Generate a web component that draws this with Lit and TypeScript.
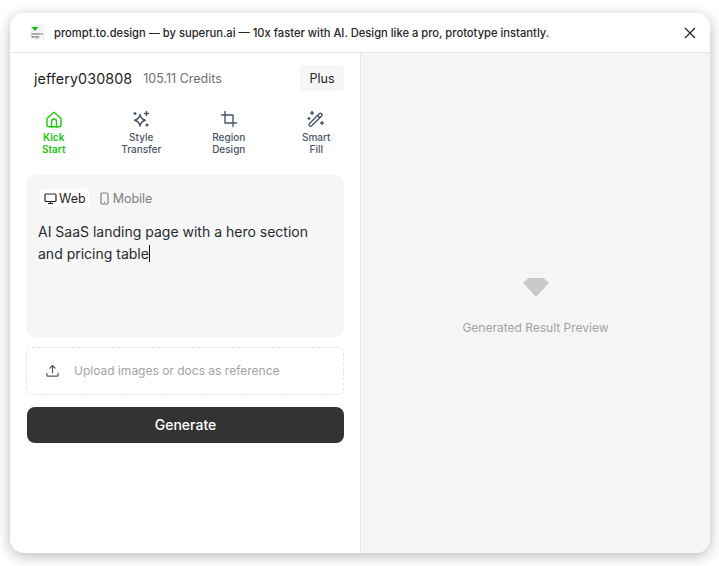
import {css, html, LitElement, svg} from 'lit';
import {customElement} from 'lit/decorators.js';

const house = svg`<path d="M3 9.500 10 3.200l7 6.300v6.300a2 2 0 0 1-2 2H5a2 2 0 0 1-2-2z"/><path d="M7.500 18v-5.500a2.500 2.500 0 0 1 5 0V18"/>`;
const sparkle = svg`<path d="M9 5.500c.7 3.600 2 5 5.500 5.700-3.500.7-4.800 2.100-5.500 5.800-.7-3.700-2-5.100-5.500-5.800C7 10.500 8.300 9.100 9 5.500z"/><path d="M15.500 2.500v4M13.500 4.500h4M4 3.500v2M3 4.500h2M16 15v2M15 16h2"/>`;
const crop = svg`<path d="M6 2.500V14h11.500"/><path d="M2.500 6H14v11.500"/>`;
const wand = svg`<path d="m3.500 14.500 9.800-9.800a1.600 1.600 0 0 1 2.300 2.300l-9.800 9.800a1.600 1.600 0 0 1-2.300-2.300z"/><path d="m11.500 6.500 2.300 2.300"/><path d="M6 2.500v3M4.500 4h3M3 8.500v2M2 9.500h2M16 12.500v3M14.500 14h3"/>`;

const tools = [
  {icon: house, lines: ['Kick', 'Start'], active: true},
  {icon: sparkle, lines: ['Style', 'Transfer'], active: false},
  {icon: crop, lines: ['Region', 'Design'], active: false},
  {icon: wand, lines: ['Smart', 'Fill'], active: false},
];

@customElement('app-root')
export class AppRoot extends LitElement {
  static override styles = css`
    :host {
      display: block;
      height: 566px;
      box-sizing: border-box;
      padding: 13px 9px 13px 10px;
      font-family: Inter, 'Liberation Sans', sans-serif;
      background: #fff;
      color: #1f2328;
    }
    .window {
      height: 540px;
      display: flex;
      flex-direction: column;
      border-radius: 14px;
      background: #fff;
      overflow: hidden;
      box-shadow: 0 3px 14px rgba(0, 0, 0, 0.28);
    }
    .titlebar {
      height: 39px;
      flex: none;
      display: flex;
      align-items: center;
      padding: 0 13px 0 20px;
      border-bottom: 1px solid #e6e6e6;
      font-size: 11.2px;
      font-weight: 500;
      color: #262626;
    }
    .logo {
      width: 15px;
      height: 15px;
      margin-right: 9px;
      flex: none;
      display: block;
    }
    .logo text {
      font-size: 2.4px;
      font-weight: 600;
      fill: #555;
    }
    .title {
      flex: 1;
      white-space: nowrap;
    }
    .close {
      width: 14px;
      height: 14px;
      display: block;
    }
    .body {
      flex: 1;
      display: flex;
      min-height: 0;
    }
    .left {
      width: 350px;
      flex: none;
      border-right: 1px solid #e6e6e6;
    }
    .account {
      display: flex;
      align-items: center;
      height: 26px;
      margin-top: 12px;
      padding: 0 16px 0 24px;
    }
    .name {
      font-size: 14.3px;
      letter-spacing: 0.1px;
      margin-right: 11px;
    }
    .credits {
      flex: 1;
      font-size: 12.5px;
      color: #6f6f6f;
    }
    .plan {
      width: 44px;
      height: 26px;
      display: flex;
      align-items: center;
      justify-content: center;
      background: #f6f6f6;
      border-radius: 4px;
      font-size: 12.5px;
    }
    .tools {
      display: grid;
      grid-template-columns: repeat(4, 1fr);
      margin-top: 18px;
    }
    .tool {
      display: flex;
      flex-direction: column;
      align-items: center;
      color: #4a5568;
      font-size: 10px;
      line-height: 12px;
      font-weight: 500;
      text-align: center;
    }
    .tool.active {
      color: #22c511;
      font-weight: 600;
    }
    .tool svg {
      width: 20px;
      height: 20px;
      margin-bottom: 2px;
      fill: none;
      stroke: currentColor;
      stroke-width: 1.4;
      stroke-linecap: round;
      stroke-linejoin: round;
    }
    .prompt {
      height: 162px;
      box-sizing: border-box;
      margin: 20px 16px 0;
      padding: 14px 12px 0;
      background: #f6f6f6;
      border-radius: 8px;
    }
    .modes {
      display: flex;
      gap: 5px;
      margin-left: 2px;
    }
    .mode {
      display: flex;
      align-items: center;
      gap: 2px;
      height: 18px;
      padding: 0 3px 0 4px;
      border-radius: 4px;
      font-size: 12.5px;
      color: #808080;
    }
    .mode.active {
      background: #fff;
      color: #262626;
    }
    .mode svg {
      width: 13px;
      height: 13px;
      fill: none;
      stroke: currentColor;
      stroke-width: 1.2;
    }
    .text {
      margin-top: 14px;
      font-size: 14px;
      line-height: 22px;
      color: #262b33;
    }
    .caret {
      display: inline-block;
      width: 1px;
      height: 17px;
      background: #111;
      vertical-align: -3px;
    }
    .upload {
      height: 48px;
      box-sizing: border-box;
      margin: 10px 16px 0;
      padding: 0 0 2px 18px;
      display: flex;
      align-items: center;
      gap: 14px;
      border: 1px dashed #e4e4e4;
      border-radius: 6px;
      font-size: 12px;
      color: #a3a3a3;
    }
    .upload svg {
      width: 15px;
      height: 15px;
      flex: none;
      fill: none;
      stroke: #595959;
      stroke-width: 1.3;
      stroke-linecap: round;
      stroke-linejoin: round;
    }
    .generate {
      height: 36px;
      box-sizing: border-box;
      padding-bottom: 1px;
      margin: 12px 16px 0 17px;
      display: flex;
      align-items: center;
      justify-content: center;
      background: #333;
      border-radius: 8px;
      color: #fff;
      font-size: 14px;
      font-weight: 500;
    }
    .preview {
      flex: 1;
      background: #f5f5f5;
      display: flex;
      flex-direction: column;
      align-items: center;
      padding-top: 224px;
      color: #a3a3a3;
      font-size: 12px;
    }
    .preview svg {
      width: 28px;
      height: 20px;
      display: block;
      margin-bottom: 23px;
    }
  `;

  override render() {
    return html`
      <div class="window">
        <header class="titlebar">
          <svg class="logo" viewBox="0 0 15 15">
            <rect width="15" height="15" rx="3" fill="#f4f4f4" />
            <path d="M1.500 2h7L5 6z" fill="#1fb50f" />
            <text x="1.500" y="9.500">prompt to</text>
            <text x="1.500" y="13.200">design</text>
          </svg>
          <span class="title">prompt.to.design — by superun.ai — 10x faster with AI. Design like a pro, prototype instantly.</span>
          <svg class="close" viewBox="0 0 14 14" fill="none" stroke="#222" stroke-width="1.2">
            <path d="M2 2l10 10M12 2 2 12" />
          </svg>
        </header>
        <div class="body">
          <section class="left">
            <div class="account">
              <span class="name">jeffery030808</span>
              <span class="credits">105.11 Credits</span>
              <span class="plan">Plus</span>
            </div>
            <div class="tools">
              ${tools.map(
                (t) => html`
                  <div class="tool ${t.active ? 'active' : ''}">
                    <svg viewBox="0 0 20 20">${t.icon}</svg>
                    <span>${t.lines[0]}</span>
                    <span>${t.lines[1]}</span>
                  </div>
                `
              )}
            </div>
            <div class="prompt">
              <div class="modes">
                <span class="mode active">
                  <svg viewBox="0 0 13 13"><rect x="1" y="2" width="11" height="7.500" rx="1" /><path d="M6.500 9.500v2M4 11.500h5" /></svg>
                  Web
                </span>
                <span class="mode">
                  <svg viewBox="0 0 13 13"><rect x="3" y="1" width="7" height="11" rx="1.200" /><path d="M6 10.300h1" /></svg>
                  Mobile
                </span>
              </div>
              <div class="text">AI SaaS landing page with a hero section and pricing table<span class="caret"></span></div>
            </div>
            <div class="upload">
              <svg viewBox="0 0 16 16"><path d="M8 10.500V3M5.200 5.500 8 2.700l2.800 2.800M2 11v2a1 1 0 0 0 1 1h10a1 1 0 0 0 1-1v-2" /></svg>
              <span>Upload images or docs as reference</span>
            </div>
            <div class="generate">Generate</div>
          </section>
          <section class="preview">
            <svg viewBox="0 0 28 20"><path d="M6.500 1h15l5.500 4.700L14 20 1 5.700z" fill="#c9c9c9" /></svg>
            <span>Generated Result Preview</span>
          </section>
        </div>
      </div>
    `;
  }
}
